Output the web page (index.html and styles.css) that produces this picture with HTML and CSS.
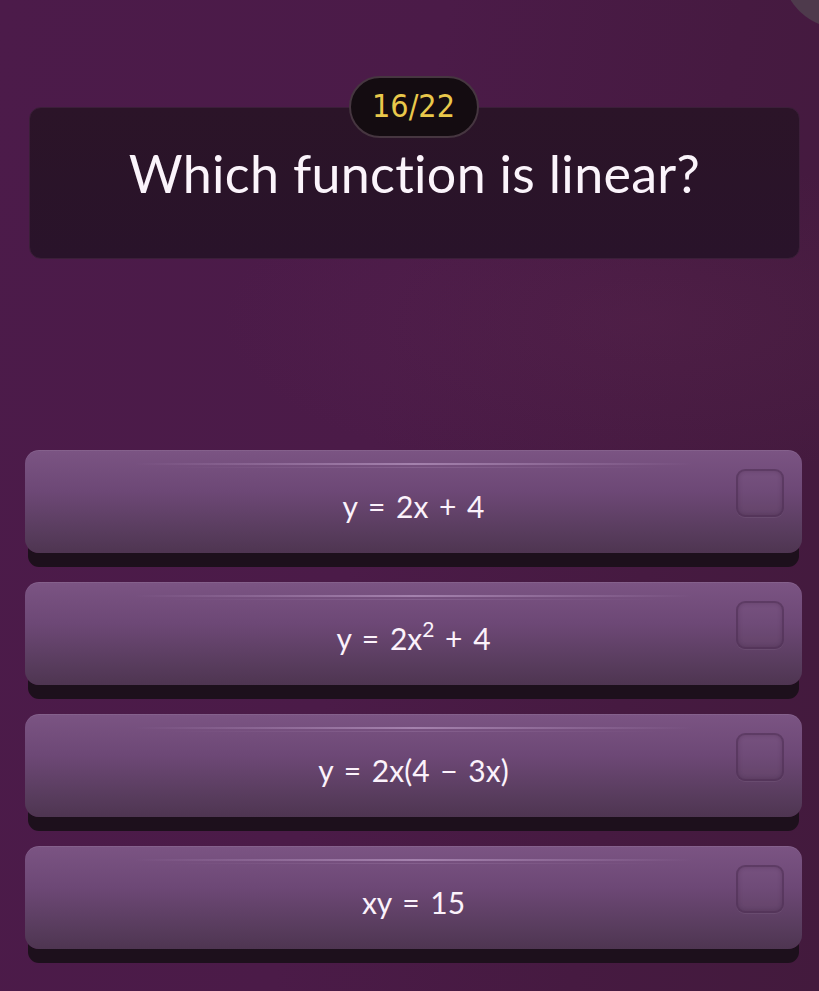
FILE: index.html
```html
<!DOCTYPE html>
<html lang="en">
<head>
<meta charset="utf-8">
<title>Quiz</title>
<link rel="stylesheet" href="styles.css">
</head>
<body>
<main class="screen">
  <div class="counter">16/22</div>
  <section class="question">
    <h1 class="question-text">Which function is linear?</h1>
  </section>
  <ul class="options">
    <li class="option">
      <span class="spacer"></span>
      <span class="answer">y = 2x + 4</span>
      <span class="check"></span>
    </li>
    <li class="option">
      <span class="spacer"></span>
      <span class="answer">y = 2x<sup>2</sup> + 4</span>
      <span class="check"></span>
    </li>
    <li class="option">
      <span class="spacer"></span>
      <span class="answer">y = 2x(4 − 3x)</span>
      <span class="check"></span>
    </li>
    <li class="option">
      <span class="spacer"></span>
      <span class="answer">xy = 15</span>
      <span class="check"></span>
    </li>
  </ul>
</main>
</body>
</html>
```

FILE: styles.css
```css
* { box-sizing: border-box; }

html, body {
  margin: 0;
  padding: 0;
}

body {
  width: 819px;
  height: 991px;
  overflow: hidden;
  font-family: "Lato", "Noto Sans", sans-serif;
  color: #fbf4fb;
  background:
    radial-gradient(circle at 842px -32px, #4e3a4c 0 60px, rgba(78,58,76,0) 61px),
    radial-gradient(ellipse 420px 160px at 640px 320px, rgba(110,50,90,0.18), rgba(110,50,90,0) 100%),
    linear-gradient(100deg, #4c1b4a 0%, #4b1b48 45%, #461a41 75%, #431a3d 100%);
}

.screen {
  height: 991px;
  padding-top: 76px;
  padding-left: 8px;
  display: flex;
  flex-direction: column;
  align-items: center;
}

.counter {
  position: relative;
  z-index: 1;
  width: 130px;
  height: 62px;
  margin-bottom: -31px;
  border-radius: 31px;
  background: #140c11;
  border: 2px solid #463640;
  display: flex;
  align-items: center;
  justify-content: center;
  color: #e9c84b;
  font-family: "Liberation Sans Narrow", "DejaVu Sans", sans-serif;
  font-stretch: condensed;
  font-size: 32px;
  padding-bottom: 2px;
}

.question {
  width: 771px;
  height: 152px;
  margin-left: 2px;
  border-radius: 12px;
  background: linear-gradient(180deg, #2b1428 0%, #29132a 100%);
  border: 1px solid #3b1f39;
  padding-top: 39px;
}

.question-text {
  margin: 0;
  text-align: center;
  font-weight: 400;
  font-size: 52px;
  line-height: 52px;
  letter-spacing: 0.3px;
}

.options {
  list-style: none;
  margin: 191px 0 0 0;
  padding: 0;
  display: flex;
  flex-direction: column;
  gap: 29px;
}

.option {
  width: 777px;
  height: 103px;
  border-radius: 14px;
  padding: 0 18px;
  display: grid;
  grid-template-columns: 1fr auto 1fr;
  align-items: center;
  background:
    linear-gradient(90deg, rgba(255,255,255,0) 0%, rgba(220,190,230,0.45) 50%, rgba(255,255,255,0) 100%) no-repeat center 13px / 72% 2px,
    linear-gradient(90deg, rgba(255,255,255,0) 10%, rgba(220,190,230,0.15) 50%, rgba(255,255,255,0) 90%) no-repeat center 17px / 80% 1px,
    linear-gradient(180deg, #7b5483 0%, #6d4876 40%, #583c5d 80%, #4e3551 100%);
  box-shadow: 0 17px 0 -3px #1d101c, inset 0 1px 0 rgba(255,255,255,0.08);
}

.answer {
  grid-column: 2;
  font-size: 30px;
  line-height: 30px;
  padding-top: 9px;
  white-space: pre;
  word-spacing: 3px;
  color: #fbf2fb;
}

.answer sup {
  font-size: 21px;
  line-height: 0;
  vertical-align: 13px;
}

.check {
  grid-column: 3;
  justify-self: end;
  width: 48px;
  height: 48px;
  margin-bottom: 17px;
  border-radius: 9px;
  border: 2px solid rgba(72, 42, 78, 0.55);
  background: rgba(255,255,255,0.02);
  box-shadow: 0 1px 0 rgba(255,255,255,0.06), inset 0 0 4px rgba(40,15,45,0.25);
}
```
